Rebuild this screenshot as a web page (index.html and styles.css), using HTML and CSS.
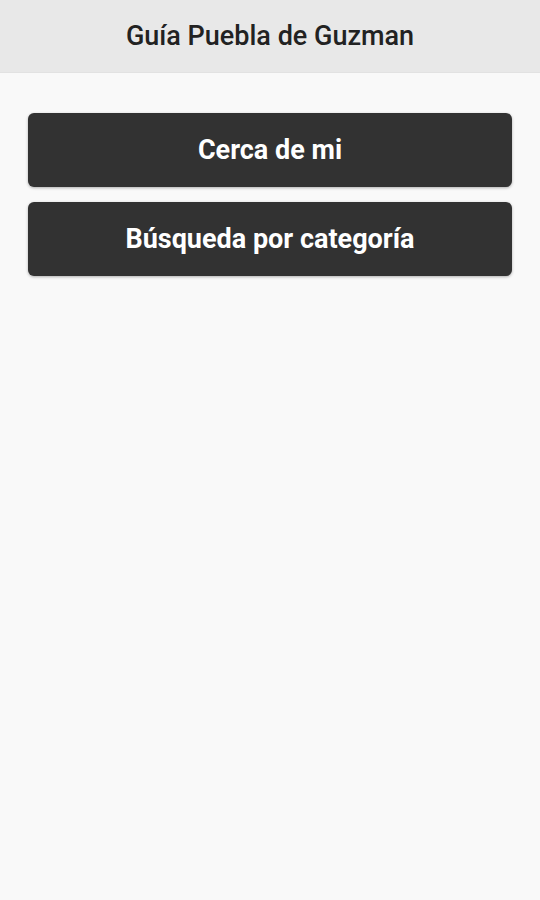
FILE: index.html
```html
<!DOCTYPE html>
<html lang="es">
<head>
    <meta charset="UTF-8">
    <meta name="viewport" content="width=device-width, initial-scale=1.0">
    <title>Guía Puebla de Guzman</title>
    <link rel="stylesheet" href="styles.css">
</head>
<body>
    <div class="header">
        <h1>Guía Puebla de Guzman</h1>
    </div>
    <div class="container">
        <button class="menu-btn">Cerca de mi</button>
        <button class="menu-btn">Búsqueda por categoría</button>
    </div>
</body>
</html>
```

FILE: styles.css
```css
html, body {
    margin: 0;
    height: 100%;
}
body {
    font-family: Roboto, "Liberation Sans", sans-serif;
    background-color: #f9f9f9;
}
.header {
    height: 73px;
    background-color: #e8e8e8;
    border-bottom: 1px solid #e2e2e2;
    box-sizing: border-box;
    display: flex;
    align-items: center;
    justify-content: center;
}
.header h1 {
    margin: 0;
    font-size: 27px;
    font-weight: 500;
    color: #222;
}
.container {
    display: flex;
    flex-direction: column;
    gap: 15px;
    padding: 40px 28px;
}
.menu-btn {
    height: 74px;
    background-color: #323232;
    color: white;
    border: none;
    border-radius: 6px;
    font-family: inherit;
    font-size: 27px;
    font-weight: 700;
    box-shadow: 0 1px 3px rgba(0, 0, 0, 0.3);
    cursor: pointer;
}
```
